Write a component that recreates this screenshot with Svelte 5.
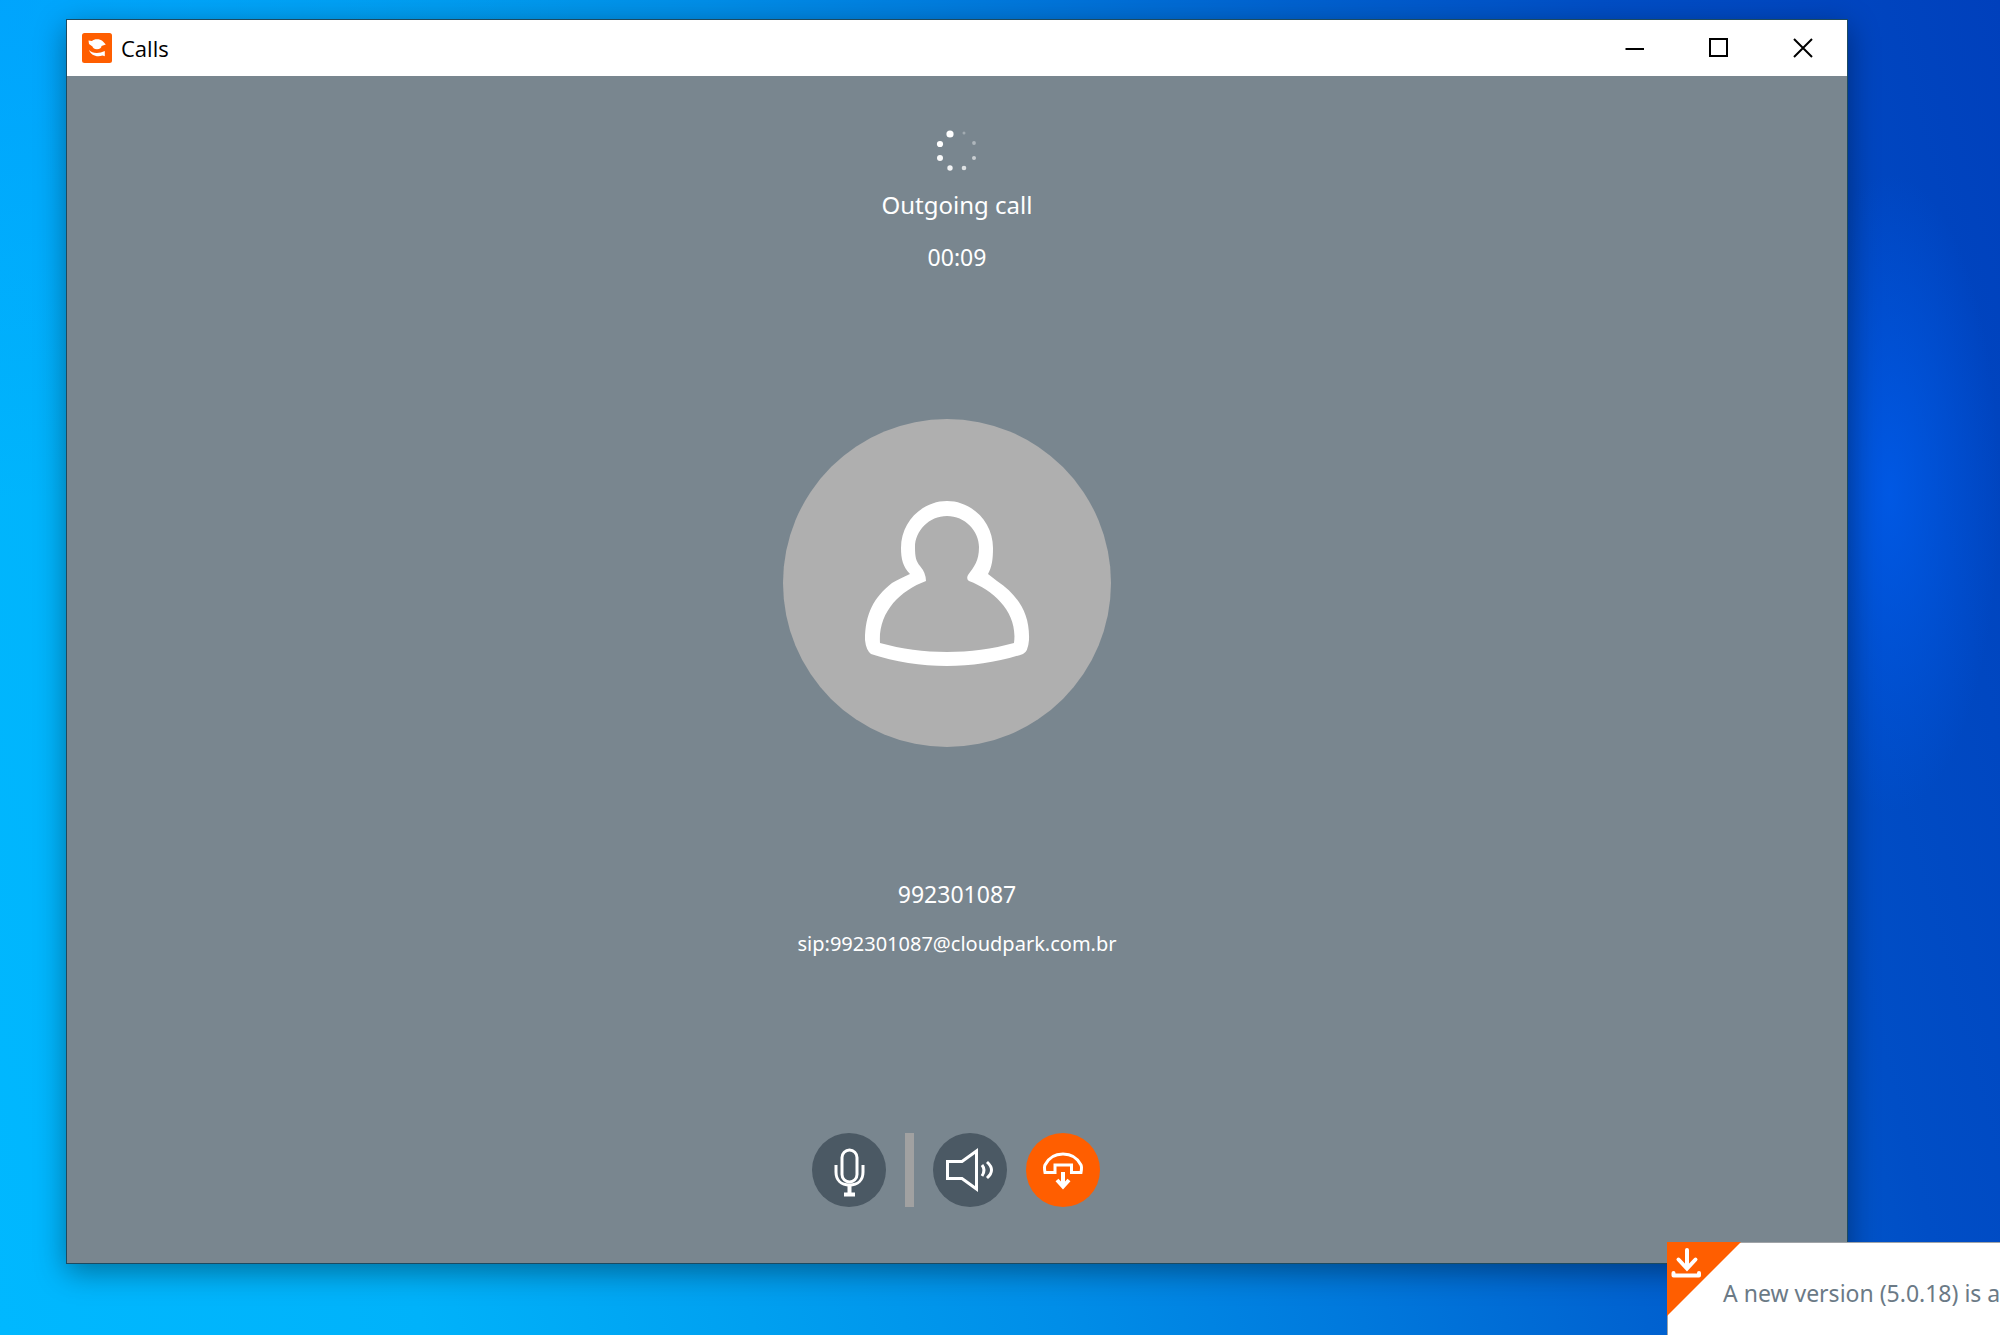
<script>
  const dots = [
    { x: 15, y: 7, r: 3.6, o: 1 },
    { x: 5, y: 17, r: 3.1, o: 1 },
    { x: 5, y: 31, r: 3, o: 0.95 },
    { x: 15, y: 41, r: 2.7, o: 0.9 },
    { x: 29, y: 41, r: 2.3, o: 0.75 },
    { x: 39, y: 31, r: 2, o: 0.6 },
    { x: 39, y: 16, r: 1.9, o: 0.4 },
    { x: 29, y: 6, r: 1.5, o: 0.3 }
  ];
</script>

<div class="desktop">
  <main class="window">
    <header class="titlebar">
      <svg class="logo" viewBox="0 0 30 30" aria-hidden="true">
        <rect width="30" height="30" rx="2.500" fill="#ff5e00" />
        <path d="M6.500 7.500L10 8C12 5.800 18 5.800 20.500 8L23.800 11.500L19.500 13C19.500 14.500 18 16.300 15 16.300S10.500 14.500 10.500 13.500L7 11Z" fill="#fff" />
        <path d="M7 17C10 20.500 17 20.800 22.800 18V23.300L20.500 22.500C15 24.500 9 22.500 7 17Z" fill="#fff" />
      </svg>
      <h1>Calls</h1>
      <div class="controls">
        <button aria-label="Minimize"><svg viewBox="0 0 20 20"><path d="M0.500 11H19" /></svg></button>
        <button aria-label="Maximize"><svg viewBox="0 0 20 20"><path d="M1 1H18V18H1Z" /></svg></button>
        <button aria-label="Close"><svg viewBox="0 0 20 20"><path d="M1 1L19 19M19 1L1 19" /></svg></button>
      </div>
    </header>

    <section class="call">
      <div class="status">
        <svg class="spinner" viewBox="0 0 44 44" aria-hidden="true">
          {#each dots as d}
            <circle cx={d.x} cy={d.y} r={d.r} fill="#fff" opacity={d.o} />
          {/each}
        </svg>
        <p class="state">Outgoing call</p>
        <p class="time">00:09</p>
      </div>

      <div class="avatar">
        <svg viewBox="0 0 328 328" role="img" aria-label="Contact">
          <circle cx="164" cy="164" r="164" fill="#afafaf" />
          <path
            fill="#fff"
            fill-rule="evenodd"
            d="M127 155C120 148 118 140 118 129C118 103 139 82 164 82S210 103 210 129C210 140 209 148 205 155L214 162C236 177 247 195 246 221Q245 233 240 235C216 243 190 247 164 247S112 243 88 235Q83 231 82 221C82 195 91 178 109 164Q114 161 127 155Z
               M164 97C146 97 132 112 132 128C132 138 133 142 137 147Q143 154 143 162C116 172 95 194 97 224C140 236 188 236 231 224C235 194 212 172 186 162Q183 160 185 156C191 148 196 142 196 128C196 112 182 97 164 97Z" />
        </svg>
      </div>

      <div class="contact">
        <p>992301087</p>
        <p class="address">sip:992301087@cloudpark.com.br</p>
      </div>

      <div class="actions">
        <button aria-label="Mute microphone">
          <svg viewBox="0 0 74 74">
            <rect x="30" y="17" width="15" height="32" rx="7.500" />
            <path d="M24 32V39C24 47 29 52 37.500 52S51 47 51 39V32" />
            <path d="M37.500 52V60M32 61.500H43" stroke-width="4" />
          </svg>
        </button>
        <span class="divider"></span>
        <button aria-label="Speaker volume">
          <svg viewBox="0 0 74 74">
            <path d="M14.500 28.500H29L43.500 18V56L29 45.500H14.500Z" stroke-width="3" />
            <path d="M49 32Q53 37 49 43M54 29Q63 37 54 45" stroke-width="3" />
          </svg>
        </button>
        <button class="hangup" aria-label="Hang up">
          <svg viewBox="0 0 74 74">
            <path d="M19 39.500Q18 34 19 32C23 24 30 21 37 21S51 24 55 32Q56 34 55 39.500H45.500V32H29V39.500Z" />
            <path d="M37 39V53M31 47L37 53.500L43 47" stroke-width="4" />
          </svg>
        </button>
      </div>
    </section>
  </main>

  <aside class="toast">
    <svg class="corner" viewBox="0 0 74 74" aria-hidden="true">
      <path d="M0 0H74L0 74Z" fill="#ff5e00" />
      <path d="M20 8V26M11.500 17.500L20 26.500L28.500 17.500" fill="none" stroke="#fff" stroke-width="4" stroke-linecap="round" />
      <path d="M6.500 31V33.500H32V31" fill="none" stroke="#fff" stroke-width="4" stroke-linecap="round" stroke-linejoin="round" />
    </svg>
    <p>A new version (5.0.18) is a</p>
  </aside>
</div>

<style>
  :global(body) {
    margin: 0;
  }

  .desktop {
    position: relative;
    display: flex;
    box-sizing: border-box;
    min-height: 100vh;
    padding: 19px 152px 71px 66px;
    overflow: hidden;
    background:
      radial-gradient(ellipse 110px 320px at 94.500% 37%, rgba(0, 92, 236, 0.8), rgba(0, 84, 224, 0)),
      radial-gradient(ellipse 600px 500px at 0 0, rgba(0, 150, 255, 0.5), rgba(0, 150, 255, 0)),
      linear-gradient(75deg, #00b8ff, #00b2fa 18%, #00a0f0 32%, #008ee8 45%, #0078dc 58%, #0062d0 70%, #004ec6 83%, #0040bc);
    font-family: "Noto Sans", "Open Sans", sans-serif;
  }

  p,
  h1 {
    margin: 0;
    font-weight: 400;
    white-space: nowrap;
  }

  button {
    display: flex;
    align-items: center;
    justify-content: center;
    padding: 0;
    border: 0;
    cursor: pointer;
  }

  .window {
    display: flex;
    flex: 1;
    flex-direction: column;
    border: 1px solid #1d4a60;
    background: #79868f;
    box-shadow: 0 8px 28px rgba(0, 0, 0, 0.38);
  }

  .titlebar {
    display: flex;
    align-items: center;
    height: 56px;
    padding: 0 2px 0 15px;
    background: #fff;
  }

  .logo {
    width: 30px;
    height: 30px;
  }

  h1 {
    margin-left: 9px;
    color: #000;
    font-family: "Open Sans", sans-serif;
    font-size: 22px;
    line-height: 30px;
  }

  .controls {
    display: flex;
    align-self: stretch;
    margin-left: auto;
  }

  .controls button {
    width: 84px;
    background: transparent;
  }

  .controls svg {
    width: 20px;
    height: 20px;
    fill: none;
    stroke: #000;
    stroke-width: 2;
  }

  .call {
    display: flex;
    flex: 1;
    flex-direction: column;
    align-items: center;
    justify-content: space-between;
    padding: 51px 0 56px;
    color: #fff;
    font-size: 23px;
    line-height: 32px;
  }

  .status,
  .contact {
    display: flex;
    flex-direction: column;
    align-items: center;
  }

  .status {
    padding-bottom: 14px;
  }

  .contact {
    padding-bottom: 41px;
  }

  .spinner {
    width: 44px;
    height: 44px;
    margin-bottom: 18px;
  }

  .state {
    font-size: 24px;
  }

  .time {
    margin-top: 20px;
  }

  .avatar {
    padding-right: 20px;
  }

  .avatar svg {
    display: block;
    width: 328px;
    height: 328px;
  }

  .address {
    margin-top: 18px;
    font-size: 20px;
  }

  .actions {
    display: flex;
    gap: 19px;
    padding-right: 2px;
  }

  .actions button {
    width: 74px;
    height: 74px;
    border-radius: 50%;
    background: #4b5964;
  }

  .actions .hangup {
    background: #ff5e00;
  }

  .actions svg {
    width: 74px;
    height: 74px;
    fill: none;
    stroke: #fff;
    stroke-width: 3;
  }

  .divider {
    width: 9px;
    background: #a1a1a1;
  }

  .toast {
    position: absolute;
    right: 0;
    bottom: 0;
    box-sizing: border-box;
    width: 333px;
    height: 93px;
    padding: 34px 0 0 55px;
    border-top: 1px solid #a0a4a8;
    border-left: 1px solid #a0a4a8;
    background: #fff;
    color: #6b7a86;
    font-size: 23px;
    line-height: 32px;
  }

  .corner {
    position: absolute;
    top: -1px;
    left: -1px;
    width: 74px;
    height: 74px;
  }
</style>
